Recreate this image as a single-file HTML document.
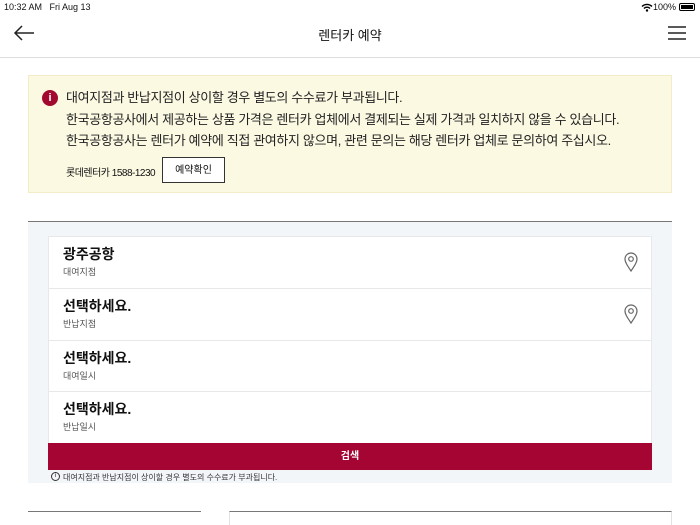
<!DOCTYPE html>
<html><head><meta charset="utf-8"><style>
*{margin:0;padding:0;box-sizing:border-box}
body{width:700px;height:525px;overflow:hidden;background:#fff;font-family:"Liberation Sans","Noto Sans CJK KR",sans-serif;color:#111;position:relative}
.abs{position:absolute}
.row{position:absolute;left:48px;width:604px;background:#fff;border:1px solid #e6e8ea}
.row .t{position:absolute;left:14px;top:7px;font-size:14px;font-weight:bold}
.row .s{position:absolute;left:14px;top:28px;font-size:9px;color:#555}
.pin{position:absolute;right:13px;top:15px}
</style></head><body>
<div class="abs" style="left:4px;top:2px;font-size:9px">10:32 AM&nbsp;&nbsp; Fri Aug 13</div>
<div class="abs" style="right:24px;top:2px;font-size:9px">100%</div>
<svg class="abs" style="left:641px;top:3px" width="12" height="9" viewBox="0 0 12 9"><path d="M1 3.5a7 7 0 0 1 10 0M3 5.5a4 4 0 0 1 6 0" stroke="#000" stroke-width="1.4" fill="none"/><circle cx="6" cy="7.5" r="1.2"/></svg>
<div class="abs" style="left:679px;top:3px;width:16px;height:8px;border:1px solid #000;border-radius:2px;padding:1px"><div style="background:#000;width:100%;height:100%"></div></div>
<svg class="abs" style="left:13px;top:25px" width="22" height="16" viewBox="0 0 22 16"><path d="M21 8H2M9 1L2 8l7 7" stroke="#222" stroke-width="1.5" fill="none"/></svg>
<div class="abs" style="left:0;width:700px;top:25px;text-align:center;font-size:13px">렌터카 예약</div>
<svg class="abs" style="left:668px;top:26px" width="18" height="14"><path d="M0 1h18M0 7h18M0 13h18" stroke="#222" stroke-width="1.4"/></svg>
<div class="abs" style="left:0;top:57px;width:700px;height:1px;background:#ddd"></div>
<div class="abs" style="left:28px;top:75px;width:644px;height:118px;background:#fcf9e3;border:1px solid #f3ecc8"></div>
<div class="abs" style="left:42px;top:90px;width:16px;height:16px;border-radius:50%;background:#a3082f;color:#fff;font-size:11px;font-weight:bold;text-align:center;line-height:16px">i</div>
<div class="abs" style="left:66px;top:87px;font-size:13px;letter-spacing:-0.35px;line-height:21.5px;color:#222;white-space:nowrap">대여지점과 반납지점이 상이할 경우 별도의 수수료가 부과됩니다.<br>한국공항공사에서 제공하는 상품 가격은 렌터카 업체에서 결제되는 실제 가격과 일치하지 않을 수 있습니다.<br>한국공항공사는 렌터가 예약에 직접 관여하지 않으며, 관련 문의는 해당 렌터카 업체로 문의하여 주십시오.</div>
<div class="abs" style="left:66px;top:164px;font-size:10px;letter-spacing:-0.5px">롯데렌터카 1588-1230</div>
<div class="abs" style="left:162px;top:157px;width:63px;height:26px;border:1px solid #333;background:#fff;font-size:10px;text-align:center;line-height:26px">예약확인</div>
<div class="abs" style="left:28px;top:221px;width:644px;height:262px;background:#f3f6f9;border-top:1px solid #777"></div>
<div class="row" style="top:236px;height:53px"><div class="t">광주공항</div><div class="s">대여지점</div><svg class="pin" width="14" height="20" viewBox="0 0 14 20"><path d="M7 19C3 13 1 10 1 7a6 6 0 0 1 12 0c0 3-2 6-6 12z" stroke="#666" fill="none" stroke-width="1.2"/><circle cx="7" cy="7" r="2.3" stroke="#666" fill="none" stroke-width="1.2"/></svg></div>
<div class="row" style="top:288px;height:53px"><div class="t">선택하세요.</div><div class="s">반납지점</div><svg class="pin" width="14" height="20" viewBox="0 0 14 20"><path d="M7 19C3 13 1 10 1 7a6 6 0 0 1 12 0c0 3-2 6-6 12z" stroke="#666" fill="none" stroke-width="1.2"/><circle cx="7" cy="7" r="2.3" stroke="#666" fill="none" stroke-width="1.2"/></svg></div>
<div class="row" style="top:340px;height:52px"><div class="t">선택하세요.</div><div class="s">대여일시</div></div>
<div class="row" style="top:391px;height:53px"><div class="t">선택하세요.</div><div class="s">반납일시</div></div>
<div class="abs" style="left:48px;top:443px;width:604px;height:27px;background:#a50533;color:#fff;font-size:10px;font-weight:bold;text-align:center;line-height:27px">검색</div>
<div class="abs" style="left:51px;top:472px;width:9px;height:9px;border:1px solid #333;border-radius:50%;font-size:6px;text-align:center;line-height:7px">i</div>
<div class="abs" style="left:63px;top:472px;font-size:8px;color:#333">대여지점과 반납지점이 상이할 경우 별도의 수수료가 부과됩니다.</div>
<div class="abs" style="left:28px;top:511px;width:173px;height:1px;background:#777"></div>
<div class="abs" style="left:229px;top:511px;width:443px;height:14px;border-top:1px solid #777;border-left:1px solid #e3e3e3;border-right:1px solid #e3e3e3"></div>
</body></html>
